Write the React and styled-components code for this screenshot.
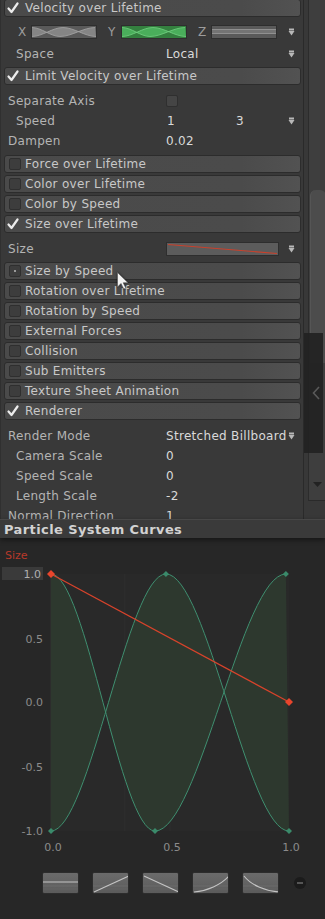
import React from 'react';
import styled, { createGlobalStyle } from 'styled-components';

const GlobalStyle = createGlobalStyle`
  html, body {
    margin: 0;
    padding: 0;
    background: #272727;
  }
  body {
    font-family: "DejaVu Sans", "Noto Sans", sans-serif;
  }
`;

const Screen = styled.div`
  position: relative;
  width: 325px;
  height: 919px;
  display: flex;
  flex-direction: column;
  overflow: hidden;
  background: #272727;
`;

/* ---------- inspector ---------- */

const Inspector = styled.div`
  height: 519px;
  flex-shrink: 0;
  display: flex;
  overflow: hidden;
  background: #393939;
`;

const InspectorContent = styled.div`
  flex: 1;
  margin-top: -1px;
  padding: 0 2px 0 3px;
  border-left: 1px solid #303030;
  box-sizing: border-box;
`;

const ModuleHeader = styled.div`
  height: 18px;
  box-sizing: border-box;
  margin-bottom: 2px;
  padding-left: 4px;
  display: flex;
  align-items: center;
  gap: 4px;
  background: linear-gradient(90deg, #4a4a4a 0%, #4b4b4b 80%, #525252 100%);
  border: 1px solid #2c2c2c;
  border-radius: 3px;
  color: #c8c8c8;
  font-size: 12px;
  letter-spacing: 0.3px;
  white-space: nowrap;
`;

const Checkbox = styled.span`
  position: relative;
  width: 12px;
  height: 12px;
  flex-shrink: 0;
  box-sizing: border-box;
  background: ${(p) => (p.$light ? '#454545' : '#3d3d3d')};
  border: 1px solid #2f2f2f;
  border-radius: 2px;

  &::after {
    content: '';
    display: ${(p) => (p.$dot ? 'block' : 'none')};
    position: absolute;
    left: 4px;
    top: 4px;
    width: 2px;
    height: 2px;
    background: #9a9a9a;
  }
`;

const CheckSlot = styled.svg`
  width: 12px;
  height: 12px;
  flex-shrink: 0;
  margin-left: -2px;
  margin-right: 2px;
`;

const ModuleBody = styled.div`
  padding: 4px 0 ${(p) => p.$bottom || 3}px;
`;

const PropRow = styled.div`
  height: ${(p) => p.$h || 20}px;
  margin-top: ${(p) => p.$mt || 0}px;
  display: grid;
  grid-template-columns: 162px 1fr 13px;
  align-items: center;
  font-size: 12px;
  letter-spacing: 0.3px;
  white-space: nowrap;
`;

const PropLabel = styled.span`
  padding-left: ${(p) => (p.$indent ? 12 : 4)}px;
  color: #b4b4b4;
  overflow: hidden;
`;

const PropValue = styled.span`
  display: flex;
  align-items: center;
  color: #dadada;
  overflow: hidden;
`;

const Field = styled.span`
  width: ${(p) => p.$w || 67}px;
  padding-left: 1px;
  flex-shrink: 0;
`;

const XYZRow = styled.div`
  height: 18px;
  display: flex;
  align-items: center;
  padding-left: 14px;
  font-size: 12px;
  color: #9c9c9c;
`;

const AxisGroup = styled.span`
  display: flex;
  align-items: center;
  margin-right: 11px;
`;

const AxisLetter = styled.span`
  width: 13px;
`;

const Swatch = styled.svg`
  display: block;
  width: ${(p) => p.$w}px;
  height: 14px;
  border: 1px solid #2e2e2e;
  box-sizing: border-box;
`;

const DropArrow = styled.svg`
  width: 7px;
  height: 8px;
  margin-left: auto;
  margin-right: 6px;
  justify-self: start;
`;

/* ---------- right scroll strip ---------- */

const ScrollColumn = styled.div`
  width: 25px;
  flex-shrink: 0;
  display: flex;
  box-sizing: border-box;
  background: #383838;
  border-left: 1px solid #2a2a2a;
  padding-left: 4px;
`;

const Track = styled.div`
  flex: 1;
  display: flex;
  flex-direction: column;
  align-items: center;
  background: #3e3e3e;
  border-left: 1px solid #2c2c2c;
  border-bottom: 1px solid #2a2a2a;
  height: 500px;
`;

const Thumb = styled.div`
  width: 15px;
  height: 173px;
  margin-top: 190px;
  background: #4c4c4c;
  border-radius: 6px 6px 0 0;
  border-left: 1px solid #555;
`;

const TrackArrow = styled.svg`
  width: 9px;
  height: 6px;
  margin-top: auto;
  margin-bottom: 12px;
`;

const Edge = styled.div`
  width: 2px;
  background: #7d8388;
`;

const VideoOverlay = styled.div`
  position: absolute;
  left: 304px;
  top: 333px;
  width: 19px;
  height: 120px;
  background: rgba(34, 34, 34, 0.92);
  display: flex;
  align-items: center;
  justify-content: flex-end;
  padding-right: 3px;
  box-sizing: border-box;
`;

const Cursor = styled.svg`
  position: absolute;
  left: 117px;
  top: 272px;
  width: 12px;
  height: 18px;
  filter: blur(0.4px) drop-shadow(0 0 1px rgba(0, 0, 0, 0.6));
`;

/* ---------- curves panel ---------- */

const CurvesPanel = styled.section`
  flex: 1;
  display: flex;
  flex-direction: column;
  background: #272727;
`;

const TitleBar = styled.div`
  height: 18px;
  display: flex;
  align-items: center;
  padding-left: 4px;
  background: #3a3a3a;
  border-top: 1px solid #474747;
  box-shadow: 0 2px 5px rgba(0, 0, 0, 0.45);
  color: #d2d2d2;
  font-size: 13px;
  font-weight: bold;
  letter-spacing: 0.4px;
`;

const Legend = styled.div`
  height: 14px;
  margin-top: 11px;
  padding-left: 5px;
  line-height: 14px;
  font-size: 11px;
  color: #b8392a;
`;

const Chart = styled.svg`
  display: block;
  width: 325px;
  height: 297px;
  font-family: "DejaVu Sans", sans-serif;
  font-size: 11px;
`;

const PresetRow = styled.div`
  display: flex;
  align-items: center;
  gap: 13px;
  margin-top: 12px;
  padding-left: 42px;
`;

const PresetButton = styled.svg`
  width: 37px;
  height: 22px;
  border: 1px solid #2d2d2d;
  border-radius: 2px;
  box-sizing: border-box;
  background: linear-gradient(#6b6b6b, #5b5b5b);
`;

const RemoveButton = styled.span`
  width: 12px;
  height: 12px;
  margin-left: 2px;
  border-radius: 50%;
  background: #1b1b1b;
  display: flex;
  align-items: center;
  justify-content: center;

  &::before {
    content: '';
    width: 6px;
    height: 2px;
    background: #555;
  }
`;

/* ---------- helpers ---------- */

const bez = (xa, ya, xb, yb) => {
  const d = (xb - xa) / 3;
  return `C${xa + d},${ya} ${xb - d},${yb} ${xb},${yb}`;
};

const minMax = (x0, w, top, bot) => {
  const X = (t) => x0 + t * w;
  const a = [[0, top], [0.437, bot], [0.987, top]];
  const b = [[0, bot], [0.483, top], [1, bot]];
  const path = (keys) =>
    `M${X(keys[0][0])},${keys[0][1]} ` +
    keys.slice(1).map((k, i) => bez(X(keys[i][0]), keys[i][1], X(k[0]), k[1])).join(' ');
  const rb = [...b].reverse();
  const fill =
    path(a) +
    ` L${X(rb[0][0])},${rb[0][1]} ` +
    rb.slice(1).map((k, i) => bez(X(rb[i][0]), rb[i][1], X(k[0]), k[1])).join(' ') +
    ' Z';
  return { a: path(a), b: path(b), fill, keysA: a.map(([t, y]) => [X(t), y]), keysB: b.map(([t, y]) => [X(t), y]) };
};

const Check = () => (
  <CheckSlot viewBox="0 0 12 12">
    <path d="M1.5 6.5 L4.5 10 L10.5 1.5" fill="none" stroke="#ececec" strokeWidth="2.2" strokeLinecap="round" strokeLinejoin="round" />
  </CheckSlot>
);

const Arrow = () => (
  <DropArrow viewBox="0 0 7 8">
    <rect x="1" y="0.5" width="5" height="2" fill="#b8b8b8" />
    <path d="M0.5 3 H6.5 L3.5 7.5 Z" fill="#b8b8b8" />
  </DropArrow>
);

const MinMaxSwatch = ({ bg, fill, stroke }) => {
  const m = minMax(0, 64, 1.5, 10.5);
  return (
    <Swatch $w={66} viewBox="0 0 64 12" preserveAspectRatio="none">
      <rect width="64" height="12" fill={bg} />
      <path d={m.fill} fill={fill} fillRule="evenodd" />
      <path d={m.a} fill="none" stroke={stroke} strokeWidth="0.8" />
      <path d={m.b} fill="none" stroke={stroke} strokeWidth="0.8" />
    </Swatch>
  );
};

const FlatSwatch = () => (
  <Swatch $w={66} viewBox="0 0 64 12" preserveAspectRatio="none">
    <rect width="64" height="12" fill="#5a5a5a" />
    <rect y="3.5" width="64" height="4" fill="#747474" />
    <line x1="0" y1="3.5" x2="64" y2="3.5" stroke="#9a9a9a" strokeWidth="0.8" />
    <line x1="0" y1="7.5" x2="64" y2="7.5" stroke="#9a9a9a" strokeWidth="0.8" />
  </Swatch>
);

const SizeSwatch = () => (
  <Swatch $w={113} viewBox="0 0 111 12" preserveAspectRatio="none">
    <rect width="111" height="12" fill="#5c5c5c" />
    <line x1="1" y1="1.5" x2="110" y2="10.5" stroke="#c9412c" strokeWidth="1.2" />
  </Swatch>
);

const Header = ({ checked, dot, children }) => (
  <ModuleHeader>
    {checked ? <Check /> : <Checkbox $dot={dot} />}
    <span>{children}</span>
  </ModuleHeader>
);

const collapsedA = ['Force over Lifetime', 'Color over Lifetime', 'Color by Speed'];
const collapsedB = [
  'Rotation over Lifetime',
  'Rotation by Speed',
  'External Forces',
  'Collision',
  'Sub Emitters',
  'Texture Sheet Animation',
];

const Diamond = ({ x, y, r, color }) => (
  <path d={`M${x},${y - r} L${x + r},${y} L${x},${y + r} L${x - r},${y} Z`} fill={color} />
);

const CurveChart = () => {
  const x0 = 51;
  const w = 238;
  const top = 11;
  const bot = 268;
  const m = minMax(x0, w, top, bot);
  const yLabels = [
    ['0.5', 76],
    ['0.0', 139],
    ['-0.5', 204],
    ['-1.0', 268],
  ];
  const xLabels = [
    ['0.0', 53],
    ['0.5', 172],
    ['1.0', 291],
  ];
  return (
    <Chart viewBox="0 0 325 297">
      <rect x={x0} y={top} width={w} height={bot - top} fill="#292929" />
      <line x1={x0} y1={top} x2={x0} y2={bot} stroke="#333" />
      <line x1={x0 + w / 2} y1={top} x2={x0 + w / 2} y2={bot} stroke="#2e2e2e" />
      <line x1={x0 + w * 0.31} y1={top} x2={x0 + w * 0.31} y2={bot} stroke="#2d2d2d" />
      <line x1={x0} y1={139} x2={x0 + w} y2={139} stroke="#2e2e2e" />
      <path d={m.fill} fill="#2d382e" fillRule="evenodd" />
      <path d={m.a} fill="none" stroke="#3f8f70" strokeWidth="1" />
      <path d={m.b} fill="none" stroke="#3f8f70" strokeWidth="1" />
      {[...m.keysA, ...m.keysB].map(([x, y], i) => (
        <Diamond key={i} x={x} y={y} r={3} color="#3a8a6a" />
      ))}
      <line x1={x0} y1={top} x2={x0 + w} y2={139} stroke="#d8432b" strokeWidth="1.3" />
      <Diamond x={x0} y={top} r={4} color="#e8452c" />
      <Diamond x={x0 + w} y={139} r={4} color="#e8452c" />

      <rect x="2" y="4" width="41" height="13" fill="#3a3a3a" />
      <text x="41" y="14.5" textAnchor="end" fill="#b0b0b0">1.0</text>
      {yLabels.map(([t, y]) => (
        <text key={t} x="43" y={y + 4} textAnchor="end" fill="#8b8b8b">
          {t}
        </text>
      ))}
      {xLabels.map(([t, x]) => (
        <text key={t} x={x} y="288" textAnchor="middle" fill="#8b8b8b">
          {t}
        </text>
      ))}
    </Chart>
  );
};

const presetShapes = [
  'M0 9 H37',
  'M1 19 L36 3',
  'M1 3 L36 19',
  'M1 19 C14 18 28 12 36 3',
  'M1 3 C8 12 22 18 36 19',
];

const App = () => (
  <>
    <GlobalStyle />
    <Screen>
      <Inspector>
        <InspectorContent>
          <Header checked>Velocity over Lifetime</Header>
          <ModuleBody>
            <XYZRow>
              <AxisGroup>
                <AxisLetter>X</AxisLetter>
                <MinMaxSwatch bg="#5a5a5a" fill="#858585" stroke="#a6a6a6" />
              </AxisGroup>
              <AxisGroup>
                <AxisLetter>Y</AxisLetter>
                <MinMaxSwatch bg="#34803f" fill="#4aae5b" stroke="#74d083" />
              </AxisGroup>
              <AxisGroup>
                <AxisLetter>Z</AxisLetter>
                <FlatSwatch />
              </AxisGroup>
              <Arrow />
            </XYZRow>
            <PropRow $mt={3}>
              <PropLabel $indent>Space</PropLabel>
              <PropValue>Local</PropValue>
              <Arrow />
            </PropRow>
          </ModuleBody>

          <Header checked>Limit Velocity over Lifetime</Header>
          <ModuleBody $bottom={4}>
            <PropRow>
              <PropLabel>Separate Axis</PropLabel>
              <PropValue>
                <Checkbox $light />
              </PropValue>
            </PropRow>
            <PropRow>
              <PropLabel $indent>Speed</PropLabel>
              <PropValue>
                <Field $w={68}>1</Field>
                <Field>3</Field>
              </PropValue>
              <Arrow />
            </PropRow>
            <PropRow>
              <PropLabel>Dampen</PropLabel>
              <PropValue>0.02</PropValue>
            </PropRow>
          </ModuleBody>

          {collapsedA.map((name) => (
            <Header key={name}>{name}</Header>
          ))}

          <Header checked>Size over Lifetime</Header>
          <ModuleBody>
            <PropRow>
              <PropLabel>Size</PropLabel>
              <PropValue>
                <SizeSwatch />
              </PropValue>
              <Arrow />
            </PropRow>
          </ModuleBody>

          <Header dot>Size by Speed</Header>
          {collapsedB.map((name) => (
            <Header key={name}>{name}</Header>
          ))}

          <Header checked>Renderer</Header>
          <ModuleBody>
            <PropRow>
              <PropLabel>Render Mode</PropLabel>
              <PropValue>Stretched Billboard</PropValue>
              <Arrow />
            </PropRow>
            <PropRow>
              <PropLabel $indent>Camera Scale</PropLabel>
              <PropValue>0</PropValue>
            </PropRow>
            <PropRow>
              <PropLabel $indent>Speed Scale</PropLabel>
              <PropValue>0</PropValue>
            </PropRow>
            <PropRow>
              <PropLabel $indent>Length Scale</PropLabel>
              <PropValue>-2</PropValue>
            </PropRow>
            <PropRow>
              <PropLabel>Normal Direction</PropLabel>
              <PropValue>1</PropValue>
            </PropRow>
          </ModuleBody>
        </InspectorContent>

        <ScrollColumn>
          <Track>
            <Thumb />
            <TrackArrow viewBox="0 0 9 6">
              <path d="M0 0 H9 L4.5 5 Z" fill="#222" />
            </TrackArrow>
          </Track>
          <Edge />
        </ScrollColumn>
      </Inspector>

      <CurvesPanel>
        <TitleBar>Particle System Curves</TitleBar>
        <Legend>Size</Legend>
        <CurveChart />
        <PresetRow>
          {presetShapes.map((d, i) => (
            <PresetButton key={i} viewBox="0 0 35 20">
              <line x1="0" y1="13" x2="35" y2="13" stroke="#6f6f6f" strokeWidth="0.8" />
              <line x1="0" y1="16" x2="35" y2="16" stroke="#666" strokeWidth="0.8" />
              <path d={d} fill="none" stroke="#c4c4c4" strokeWidth="1.1" />
            </PresetButton>
          ))}
          <RemoveButton />
        </PresetRow>
      </CurvesPanel>

      <VideoOverlay>
        <svg width="8" height="14" viewBox="0 0 8 14">
          <path d="M7 1 L1.5 7 L7 13" fill="none" stroke="#5a5a5a" strokeWidth="1.6" />
        </svg>
      </VideoOverlay>

      <Cursor viewBox="0 0 12 18">
        <path d="M0.5 0.5 V15 L4 11.5 L6.8 17 L8.8 16 L6.2 10.8 L11 10.8 Z" fill="#f2f2f2" stroke="#555" strokeWidth="0.6" />
      </Cursor>
    </Screen>
  </>
);

export default App;
